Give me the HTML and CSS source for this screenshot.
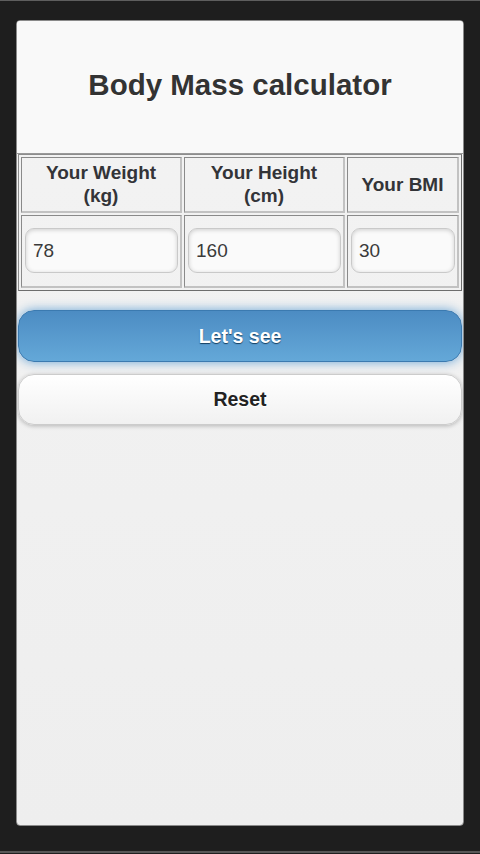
FILE: index.html
```html
<!DOCTYPE html>
<html lang="en">
<head>
<meta charset="utf-8">
<title>Body Mass calculator</title>
<link rel="stylesheet" href="styles.css">
</head>
<body>
<div class="device">
  <div class="screen">
    <header class="bar">
      <h1 class="title">Body Mass calculator</h1>
    </header>
    <main class="content">
      <table class="bmi">
        <thead>
          <tr>
            <th class="col-wide">Your Weight<br>(kg)</th>
            <th class="col-wide">Your Height<br>(cm)</th>
            <th class="col-narrow">Your BMI</th>
          </tr>
        </thead>
        <tbody>
          <tr>
            <td><input class="field" type="text" value="78"></td>
            <td><input class="field" type="text" value="160"></td>
            <td><input class="field" type="text" value="30"></td>
          </tr>
        </tbody>
      </table>
      <div class="actions">
        <button class="btn btn-primary" type="button">Let's see</button>
        <button class="btn btn-plain" type="button">Reset</button>
      </div>
    </main>
  </div>
</div>
</body>
</html>
```
FILE: styles.css
```css
* { box-sizing: border-box; }

html, body {
  margin: 0;
  padding: 0;
  background: #1e1e1e;
  font-family: "Liberation Sans", Arial, sans-serif;
}

.device {
  width: 480px;
  height: 853px;
  border-top: 1px solid #5e5e5e;
  border-bottom: 2px solid #575757;
  padding: 19px 16px 25px 16px;
  background: #1e1e1e;
}

.screen {
  height: 806px;
  border: 1px solid #8a8a8a;
  border-radius: 4px;
  background: linear-gradient(#f3f3f3, #eeeeee);
  overflow: hidden;
  display: flex;
  flex-direction: column;
}

.bar {
  height: 133px;
  flex: 0 0 auto;
  background: #f9f9f9;
  border-bottom: 1px solid #9a9a9a;
  display: flex;
  align-items: center;
  justify-content: center;
  padding-bottom: 5px;
}

.title {
  margin: 0;
  font-size: 29.5px;
  font-weight: bold;
  color: #333333;
  text-shadow: 0 1px 0 #ffffff;
}

.content {
  padding: 0 1px;
}

.bmi {
  width: 444px;
  table-layout: fixed;
  border-collapse: separate;
  border-spacing: 2px;
  border: 1px solid;
  border-color: #8d8d8d #6d6d6d #6d6d6d #8d8d8d;
}

.bmi th,
.bmi td {
  border-style: solid;
  border-width: 1px 2px 2px 1px;
  border-color: #8a8a8a #c2c2c2 #c2c2c2 #8a8a8a;
}

.col-wide { width: 161px; }

.bmi th {
  height: 56px;
  padding: 3px 2px 4px 2px;
  font-size: 19px;
  line-height: 23px;
  font-weight: bold;
  color: #333438;
  text-align: center;
  vertical-align: middle;
}

.bmi td {
  height: 73px;
  padding: 12px 2px 13px 3px;
}

.field {
  display: block;
  width: 100%;
  height: 45px;
  margin: 0;
  padding: 0 0 0 7px;
  border: 1px solid #c9c9c9;
  border-radius: 9px;
  background: #fafafa;
  box-shadow: inset 0 1px 4px rgba(0, 0, 0, 0.18);
  font-family: "Liberation Sans", Arial, sans-serif;
  font-size: 19px;
  color: #3a3a3a;
  outline: none;
}

.actions {
  margin-top: 19px;
  display: flex;
  flex-direction: column;
  gap: 12px;
}

.btn {
  display: block;
  width: 444px;
  margin: 0;
  border-radius: 16px;
  font-family: "Liberation Sans", Arial, sans-serif;
  font-size: 19.5px;
  font-weight: bold;
  cursor: pointer;
}

.btn-primary {
  height: 52px;
  border: 1px solid #3b7ab0;
  background: linear-gradient(#4c8cc3, #64a8d8);
  color: #ffffff;
  text-shadow: 0 1px 1px #163f60;
  box-shadow: 0 0 11px #6aa5d6;
}

.btn-plain {
  height: 51px;
  border: 1px solid #cccccc;
  background: linear-gradient(#ffffff, #f1f1f1);
  color: #222222;
  text-shadow: 0 1px 0 #ffffff;
  box-shadow: 0 1px 4px rgba(0, 0, 0, 0.25);
}
```
